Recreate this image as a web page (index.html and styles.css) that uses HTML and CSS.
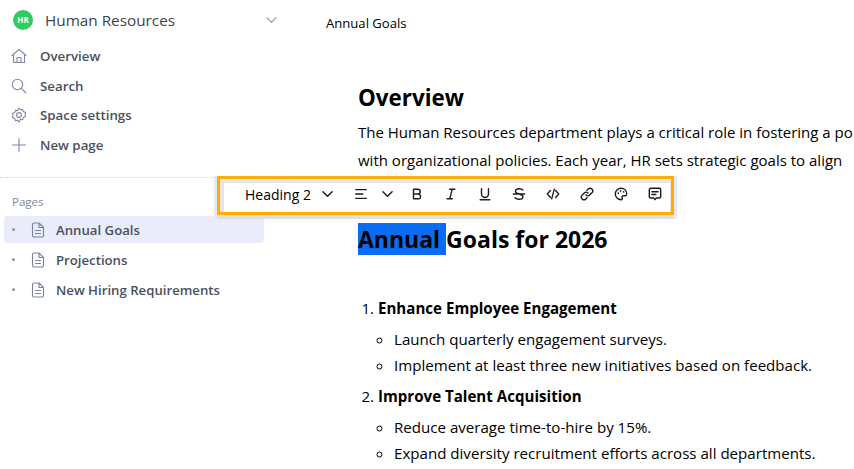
FILE: index.html
```html
<!DOCTYPE html>
<html lang="en">
<head>
    <meta charset="UTF-8">
    <title>Annual Goals</title>
    <link rel="stylesheet" href="styles.css">
</head>
<body>
    <div class="sidebar">
        <div class="space-head">
            <span class="space-badge">HR</span>
            <span class="space-name">Human Resources</span>
            <svg class="space-chevron" viewBox="0 0 12 8"><path d="M1 1.500l5 5 5-5"/></svg>
        </div>
        <div class="nav">
            <div class="nav-item">
                <svg viewBox="0 0 16 16"><path d="M1 7.500L8 1.500l7 6M2.500 6.500v8h11v-8M6 14.500V9.500h4v5"/></svg>
                Overview
            </div>
            <div class="nav-item">
                <svg viewBox="0 0 16 16"><circle cx="6.500" cy="6.500" r="5.200"/><path d="M10.400 10.400l4.600 4.600"/></svg>
                Search
            </div>
            <div class="nav-item">
                <svg viewBox="0 0 16 16"><path d="M8 1l1.400 1.700 2.200-.3.800 2.100 2.100.9-.4 2.100.4 2.100-2.100.9-.8 2.100-2.200-.3L8 15l-1.400-1.700-2.200.3-.8-2.100-2.100-.9.4-2.100-.4-2.100 2.100-.9.8-2.100 2.200.3z"/><circle cx="8" cy="8" r="2.400"/></svg>
                Space settings
            </div>
            <div class="nav-item">
                <svg viewBox="0 0 16 16"><path d="M8 1.500v13M1.500 8h13"/></svg>
                New page
            </div>
        </div>
        <div class="pages">
            <div class="pages-label">Pages</div>
            <div class="page-item active">
                <span class="dot"></span>
                <svg viewBox="0 0 14 16"><path d="M1.500 2.500a1.500 1.500 0 0 1 1.500-1.500h5l4.500 4.500v8a1.500 1.500 0 0 1-1.500 1.500H3a1.500 1.500 0 0 1-1.500-1.500zM8 1v4.500h4.500M4.500 8.500h5M4.500 11.500h5"/></svg>
                Annual Goals
            </div>
            <div class="page-item">
                <span class="dot"></span>
                <svg viewBox="0 0 14 16"><path d="M1.500 2.500a1.500 1.500 0 0 1 1.500-1.500h5l4.500 4.500v8a1.500 1.500 0 0 1-1.500 1.500H3a1.500 1.500 0 0 1-1.500-1.500zM8 1v4.500h4.500M4.500 8.500h5M4.500 11.500h5"/></svg>
                Projections
            </div>
            <div class="page-item">
                <span class="dot"></span>
                <svg viewBox="0 0 14 16"><path d="M1.500 2.500a1.500 1.500 0 0 1 1.500-1.500h5l4.500 4.500v8a1.500 1.500 0 0 1-1.500 1.500H3a1.500 1.500 0 0 1-1.500-1.500zM8 1v4.500h4.500M4.500 8.500h5M4.500 11.500h5"/></svg>
                New Hiring Requirements
            </div>
        </div>
    </div>

    <div class="main">
        <div class="page-title">Annual Goals</div>
        <div class="doc">
            <h2 class="overview">Overview</h2>
            <p class="intro">The Human Resources department plays a critical role in fostering a po<br>with organizational policies. Each year, HR sets strategic goals to align</p>
            <h2 class="goals"><span class="selected">Annual </span>Goals for 2026</h2>
            <ol>
                <li><strong>Enhance Employee Engagement</strong>
                    <ul>
                        <li>Launch quarterly engagement surveys.</li>
                        <li>Implement at least three new initiatives based on feedback.</li>
                    </ul>
                </li>
                <li><strong>Improve Talent Acquisition</strong>
                    <ul>
                        <li>Reduce average time-to-hire by 15%.</li>
                        <li>Expand diversity recruitment efforts across all departments.</li>
                    </ul>
                </li>
            </ol>
        </div>
    </div>

    <div class="toolbar-shadow"></div>
    <div class="toolbar">
        <div class="toolbar-body">
            <span class="heading-select">Heading 2</span>
            <svg class="tool chev" viewBox="0 0 12 8"><path d="M1 1.500l5 5 5-5"/></svg>
            <svg class="tool align" viewBox="0 0 16 16"><path d="M2 3h12M2 8h8M2 13h12"/></svg>
            <svg class="tool chev second" viewBox="0 0 12 8"><path d="M1 1.500l5 5 5-5"/></svg>
            <svg class="tool" viewBox="0 0 16 16"><path d="M4 2.500h5a2.700 2.700 0 0 1 0 5.500H4zM4 8h5.800a2.800 2.800 0 0 1 0 5.500H4z"/></svg>
            <svg class="tool" viewBox="0 0 16 16"><path d="M6.500 2.500h6M3.500 13.500h6M9.500 2.500l-3 11"/></svg>
            <svg class="tool" viewBox="0 0 16 16"><path d="M4 2v6a4 4 0 0 0 8 0V2M2.500 14.500h11"/></svg>
            <svg class="tool" viewBox="0 0 16 16"><path d="M12.500 3.500C11.500 2.300 10 2 8 2 5.500 2 4 3 4 5c0 3.500 8.500 2.500 8.500 6 0 2-1.800 3-4.500 3-2 0-3.500-.5-4.500-1.700M1.500 8h13"/></svg>
            <svg class="tool" viewBox="0 0 16 16"><path d="M5 4L1.500 8 5 12M11 4l3.500 4L11 12M9.500 2.500l-3 11"/></svg>
            <svg class="tool" viewBox="0 0 16 16"><path d="M6.800 9.200a3 3 0 0 0 4.300 0l2.500-2.500a3 3 0 0 0-4.300-4.300L8 3.700M9.200 6.800a3 3 0 0 0-4.300 0L2.400 9.300a3 3 0 0 0 4.300 4.300L8 12.300"/></svg>
            <svg class="tool" viewBox="0 0 16 16"><path d="M8 1.500a6.500 6.500 0 0 0 0 13c1.500 0 1.800-1 1.300-2-.6-1.300.2-2.500 1.700-2.500h2c1 0 1.500-.7 1.500-2.200C14.500 4 11.500 1.500 8 1.500z"/><circle class="fill" cx="5" cy="7" r="1"/><circle class="fill" cx="7.500" cy="4.500" r="1"/><circle class="fill" cx="11" cy="5.500" r="1"/></svg>
            <svg class="tool" viewBox="0 0 16 16"><path d="M3 1.500h10A1.500 1.500 0 0 1 14.500 3v8a1.500 1.500 0 0 1-1.500 1.500H9.500L8 14.500l-1.500-2H3A1.500 1.500 0 0 1 1.500 11V3A1.500 1.500 0 0 1 3 1.500zM4.500 5.500h7M4.500 8.500h4.500"/></svg>
        </div>
    </div>
</body>
</html>
```

FILE: styles.css
```css
body {
    margin: 0;
    width: 854px;
    height: 469px;
    overflow: hidden;
    display: flex;
    background: white;
    font-family: "Open Sans", "Noto Sans", sans-serif;
    position: relative;
}

svg {
    fill: none;
    stroke: currentColor;
    stroke-linecap: round;
    stroke-linejoin: round;
}

.sidebar {
    width: 282px;
    flex-shrink: 0;
    color: #4a5060;
}

.space-head {
    display: flex;
    align-items: center;
    height: 20px;
    padding: 10px 5px 0 13px;
}

.space-badge {
    width: 20px;
    height: 20px;
    border-radius: 50%;
    background: #2ecc63;
    color: white;
    font-size: 8px;
    font-weight: 700;
    line-height: 20px;
    text-align: center;
}

.space-name {
    margin-left: 12px;
    font-size: 15.300px;
    font-weight: 500;
    color: #3c4350;
}

.space-chevron {
    width: 11px;
    height: 8px;
    margin-left: auto;
    color: #8d96a8;
    stroke-width: 1.200;
}

.nav {
    margin-top: 11px;
}

.nav-item {
    display: flex;
    align-items: center;
    height: 29.700px;
    padding-left: 11px;
    gap: 13px;
    font-size: 13.300px;
    font-weight: 600;
}

.nav-item svg {
    width: 16px;
    height: 16px;
    color: #8187a6;
    stroke-width: 1.100;
}

.pages {
    margin-top: 17px;
    padding-top: 16px;
    border-top: 1px dotted #cfd3f7;
}

.pages-label {
    padding-left: 12px;
    font-size: 11.500px;
    line-height: 16px;
    color: #7f86a8;
    margin-bottom: 6px;
}

.page-item {
    display: flex;
    align-items: center;
    box-sizing: border-box;
    height: 27px;
    margin: 0 18px 3px 4px;
    padding: 1px 0 0 8px;
    border-radius: 4px;
    font-size: 13.200px;
    font-weight: 600;
}

.page-item.active {
    background: #eaecfb;
}

.dot {
    width: 3px;
    height: 3px;
    border-radius: 50%;
    background: #8d93ac;
}

.page-item svg {
    width: 14px;
    height: 16px;
    margin: 0 11px 0 16px;
    color: #7a80a0;
    stroke-width: 1.100;
}

.main {
    flex: 1;
    min-width: 0;
    color: black;
}

.page-title {
    margin: 14px 0 0 44px;
    font-size: 13.100px;
    line-height: 18px;
}

.doc {
    margin-left: 76px;
    white-space: nowrap;
}

h2 {
    margin: 0;
    font-weight: 700;
}

.overview {
    margin-top: 51px;
    font-size: 22.400px;
    line-height: 30px;
}

.intro {
    margin: 5px 0 0;
    font-size: 15px;
    line-height: 28px;
}

.goals {
    margin-top: 49px;
    font-size: 23px;
    line-height: 32px;
}

.selected {
    background: #0a6cf0;
}

ol {
    margin: 40px 0 0;
    padding-left: 20px;
    font-size: 15.100px;
    line-height: 26px;
}

ol > li {
    margin-bottom: 5px;
}

ul {
    list-style: circle;
    padding-left: 16px;
    margin: 5px 0 0;
}

.toolbar-shadow {
    position: absolute;
    left: 214px;
    top: 176px;
    width: 463px;
    height: 43px;
    background: #e8e9f6;
}

.toolbar {
    position: absolute;
    left: 217px;
    top: 176px;
    width: 447px;
    height: 29px;
    border: 3px solid #ffad00;
    padding: 4px 0 0 4px;
    background: #e6e6e8;
    box-shadow: 0 4px 0 #dfdfdf;
}

.toolbar-body {
    height: 100%;
    box-sizing: border-box;
    margin-right: 1px;
    padding: 0 0 7px 21px;
    display: flex;
    align-items: center;
    background: white;
}

.heading-select {
    width: 77px;
    font-size: 14px;
    color: black;
}

.tool {
    width: 14px;
    height: 14px;
    color: #1c1c24;
    stroke-width: 1.600;
    margin-right: 20px;
}

.tool:last-child {
    margin-right: 0;
}

.tool.chev {
    width: 11px;
    height: 8px;
    margin-right: 21px;
}

.tool.chev.second {
    margin-right: 17.500px;
}

.tool.align {
    margin-right: 13.500px;
}

.fill {
    fill: currentColor;
    stroke: none;
}
```
